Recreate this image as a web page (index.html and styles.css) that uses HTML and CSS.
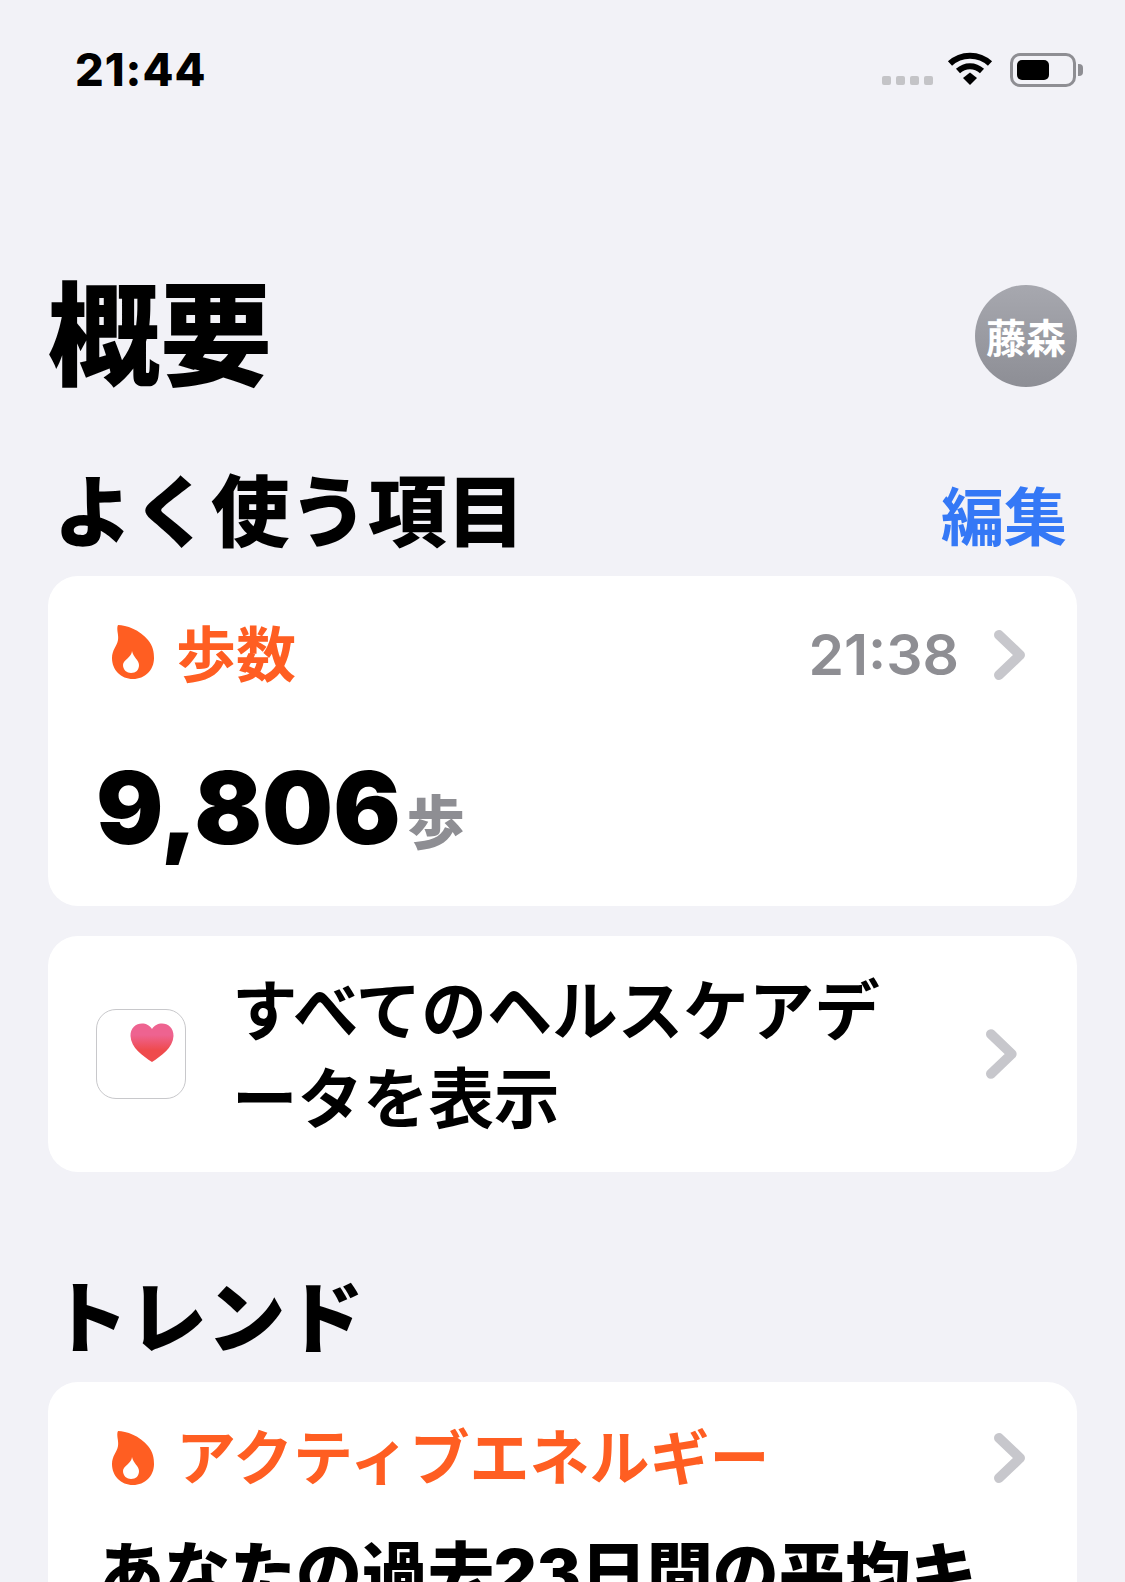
FILE: index.html

```html
<!DOCTYPE html>
<html lang="ja">

<head>
  <meta charset="UTF-8">
  <meta name="viewport" content="width=device-width, initial-scale=1.0">
  <title>概要</title>
  <link rel="stylesheet" href="styles.css">
</head>

<body>

  <svg class="defs" width="0" height="0">
    <symbol id="flame" viewBox="0 0 42 54">
      <path fill-rule="evenodd" d="M6 0C14 0 28 5 36 15C41 21 42 27 42 33C42 45 33 54 21 54C9 54 0 45 0 33C0 25 5 21 6 15C7 10 4 4 6 0ZM20 26C20 32 11 35 11 40C11 45 15 48 19 48C24 48 27 45 27 40C27 35 21 32 20 26Z" />
    </symbol>
    <symbol id="chevron" viewBox="0 0 34 50">
      <path d="M6 5L27 25L6 45" fill="none" stroke="currentColor" stroke-width="10" stroke-linecap="round" stroke-linejoin="round" />
    </symbol>
  </svg>

  <div class="status-bar">
    <span class="clock">21:44</span>
    <div class="status-icons">
      <div class="signal"><i></i><i></i><i></i><i></i></div>
      <svg class="wifi" width="48" height="34" viewBox="0 0 46 34">
        <path d="M3 11.500C14 1 32 1 43 11.500" fill="none" stroke="#000" stroke-width="6" />
        <path d="M11 19C18 12.500 28 12.500 35 19" fill="none" stroke="#000" stroke-width="6" />
        <path d="M16 26L23 20.500L30 26L23 33Z" fill="#000" />
      </svg>
      <div class="battery"><div class="battery-level"></div></div>
      <div class="battery-cap"></div>
    </div>
  </div>

  <div class="title-row">
    <h1>概要</h1>
    <div class="avatar">藤森</div>
  </div>

  <div class="section-head">
    <h2>よく使う項目</h2>
    <span class="edit">編集</span>
  </div>

  <div class="card steps-card">
    <div class="card-top">
      <svg class="flame"><use href="#flame" /></svg>
      <span class="metric">歩数</span>
      <span class="time">21:38</span>
      <svg class="chevron"><use href="#chevron" /></svg>
    </div>
    <div class="value-row">
      <span class="value">9,806</span>
      <span class="unit">歩</span>
    </div>
  </div>

  <div class="card all-data">
    <div class="app-icon">
      <svg class="heart" width="44" height="40" viewBox="0 0 44 40">
        <defs>
          <linearGradient id="heartFill" x1="0" y1="0" x2="0" y2="1">
            <stop offset="0.3" stop-color="#ee6390" />
            <stop offset="0.7" stop-color="#ef4a4c" />
          </linearGradient>
        </defs>
        <path fill="url(#heartFill)" d="M22 39C13 33 1 25 0.500 13C0.200 5 6 0.500 12 0.500C16 0.500 20 2.500 22 6C24 2.500 28 0.500 32 0.500C38 0.500 43.800 5 43.500 13C43 25 31 33 22 39Z" />
      </svg>
    </div>
    <p class="all-data-text">すべてのヘルスケアデータを表示</p>
    <svg class="chevron"><use href="#chevron" /></svg>
  </div>

  <h2 class="trends-head">トレンド</h2>

  <div class="card trend-card">
    <div class="card-top">
      <svg class="flame"><use href="#flame" /></svg>
      <span class="metric">アクティブエネルギー</span>
      <svg class="chevron push"><use href="#chevron" /></svg>
    </div>
    <p class="trend-text">あなたの過去23日間の平均キ</p>
  </div>

</body>

</html>
```

FILE: styles.css

```css
* {
  box-sizing: border-box;
}

html,
body {
  margin: 0;
  height: 1582px;
  overflow: hidden;
}

body {
  background-color: #f2f2f7;
  color: #000;
  font-family: "Inter", "Noto Sans CJK JP", sans-serif;
}

.defs {
  position: absolute;
}

.status-bar {
  height: 282px;
  padding: 43px 42px 0 75px;
  display: flex;
  justify-content: space-between;
  align-items: flex-start;
}

.clock {
  font-size: 45px;
  line-height: 53px;
  font-weight: 800;
  letter-spacing: 1px;
}

.status-icons {
  display: flex;
  align-items: center;
  margin-top: 10px;
}

.signal {
  display: flex;
  gap: 5px;
  margin-top: 21px;
  margin-right: 13px;
}

.signal i {
  width: 9px;
  height: 9px;
  border-radius: 2px;
  background-color: #c4c4c7;
}

.wifi {
  margin-right: 16px;
  margin-top: -2px;
}

.battery {
  width: 66px;
  height: 34px;
  padding: 4px;
  border: 3px solid #8e8e93;
  border-radius: 10px;
}

.battery-level {
  width: 32px;
  height: 100%;
  border-radius: 5px;
  background-color: #000;
}

.battery-cap {
  width: 5px;
  height: 12px;
  margin-left: 2px;
  border-radius: 0 4px 4px 0;
  background-color: #8e8e93;
}

.title-row {
  height: 180px;
  padding: 0 48px 0 48px;
  display: flex;
  justify-content: space-between;
  align-items: flex-start;
}

h1 {
  margin: 0;
  font-size: 112px;
  line-height: 108px;
  font-weight: 900;
}

.avatar {
  width: 102px;
  height: 102px;
  margin-top: 3px;
  border-radius: 50%;
  background: linear-gradient(#a7a8af, #8d8e95);
  color: #fff;
  font-size: 40px;
  font-weight: 700;
  display: flex;
  align-items: center;
  justify-content: center;
}

.section-head {
  height: 114px;
  padding: 6px 58px 0 54px;
  display: flex;
  justify-content: space-between;
  align-items: flex-start;
}

h2 {
  margin: 0;
  font-size: 78.500px;
  line-height: 90px;
  font-weight: 900;
}

.edit {
  margin-top: 4px;
  font-size: 63px;
  line-height: 90px;
  font-weight: 700;
  color: #3478f6;
}

.card {
  margin: 0 48px;
  background-color: #fff;
  border-radius: 30px;
}

.card-top {
  display: flex;
  align-items: center;
  height: 60px;
}

.flame {
  width: 42px;
  height: 54px;
  fill: #ff5e22;
  margin-right: 22px;
}

.steps-card .flame {
  margin-top: -6px;
}

.metric {
  font-size: 60px;
  line-height: 60px;
  font-weight: 700;
  color: #ff5e22;
}

.time {
  margin-left: auto;
  margin-right: 34px;
  font-size: 57px;
  line-height: 60px;
  font-weight: 600;
  color: #8e8e93;
}

.chevron {
  width: 34px;
  height: 50px;
  color: #c7c7cc;
}

.push {
  margin-left: auto;
}

.steps-card {
  height: 330px;
  padding: 49px 50px 0 64px;
}

.value-row {
  margin-top: 66px;
  margin-left: -16px;
  display: flex;
  align-items: flex-end;
}

.value {
  font-size: 100px;
  line-height: 114px;
  font-weight: 900;
}

.unit {
  margin-left: 6px;
  margin-bottom: 2px;
  font-size: 58px;
  line-height: 80px;
  font-weight: 900;
  color: #8e8e93;
}

.all-data {
  margin-top: 30px;
  height: 236px;
  padding: 4px 58px 0 48px;
  display: flex;
  align-items: center;
}

.app-icon {
  width: 90px;
  height: 90px;
  flex: none;
  margin-top: -4px;
  padding: 13px 11px 0 33px;
  border: 1px solid #c8c8cb;
  border-radius: 20px;
}

.heart {
  display: block;
}

.all-data-text {
  margin: 0 100px 0 46px;
  width: 660px;
  font-size: 65.500px;
  line-height: 88px;
  font-weight: 700;
}

.all-data .chevron {
  margin-top: -4px;
}

.trends-head {
  margin: 102px 0 0 50px;
  height: 108px;
}

.trend-card {
  height: 300px;
  padding: 46px 50px 0 64px;
}

.trend-text {
  margin: 40px 0 0 -14px;
  font-size: 66px;
  line-height: 90px;
  font-weight: 900;
  white-space: nowrap;
}
```
